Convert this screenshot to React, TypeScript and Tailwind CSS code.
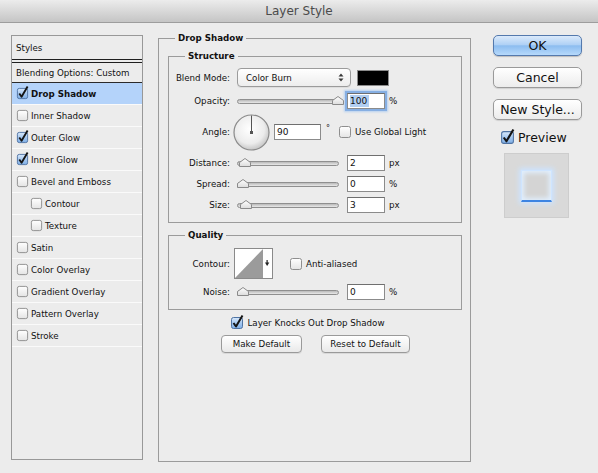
import type { ReactNode } from 'react';

const font = "font-['DejaVu_Sans',sans-serif]";

function CheckBox({ checked = false, size = 12 }: { checked?: boolean; size?: number }) {
  return (
    <svg width={size + 2} height={size + 2} viewBox="0 0 14 14" className="shrink-0 overflow-visible">
      <defs>
        <linearGradient id={checked ? 'cbOn' : 'cbOff'} x1="0" y1="0" x2="0" y2="1">
          {checked ? (
            <>
              <stop offset="0" stopColor="#d9e9fb" />
              <stop offset="0.5" stopColor="#a7c9f0" />
              <stop offset="1" stopColor="#7eaee6" />
            </>
          ) : (
            <>
              <stop offset="0" stopColor="#ffffff" />
              <stop offset="1" stopColor="#e4e4e4" />
            </>
          )}
        </linearGradient>
      </defs>
      <rect
        x="1.5"
        y="1.5"
        width="11"
        height="11"
        rx="2"
        fill={checked ? 'url(#cbOn)' : 'url(#cbOff)'}
        stroke={checked ? '#4f73a3' : '#8e8e8e'}
      />
      {checked && (
        <path d="M3.5 7 L6 10.5 L12.5 -0.5" fill="none" stroke="#151515" strokeWidth="2" strokeLinejoin="round" />
      )}
    </svg>
  );
}

const sideItems: { label: string; checked?: boolean; indent?: boolean; active?: boolean }[] = [
  { label: 'Drop Shadow', checked: true, active: true },
  { label: 'Inner Shadow' },
  { label: 'Outer Glow', checked: true },
  { label: 'Inner Glow', checked: true },
  { label: 'Bevel and Emboss' },
  { label: 'Contour', indent: true },
  { label: 'Texture', indent: true },
  { label: 'Satin' },
  { label: 'Color Overlay' },
  { label: 'Gradient Overlay' },
  { label: 'Pattern Overlay' },
  { label: 'Stroke' },
];

function Slider({ pos }: { pos: number }) {
  return (
    <div className="relative h-[16px] w-[104px]">
      <div className="absolute left-[1px] right-[1px] top-[6px] h-[5px] rounded-full border border-[#8f8f8f] bg-gradient-to-b from-[#b9b9b9] to-[#e9e9e9]" />
      <svg width="12" height="9" viewBox="0 0 12 9" className="absolute top-[3px]" style={{ left: pos }}>
        <defs>
          <linearGradient id="thumb" x1="0" y1="0" x2="0" y2="1">
            <stop offset="0" stopColor="#ffffff" />
            <stop offset="1" stopColor="#dcdcdc" />
          </linearGradient>
        </defs>
        <path d="M0.5 4.5 L6 0.5 L11.5 4.5 V8.5 H0.5 Z" fill="url(#thumb)" stroke="#8a8a8a" />
      </svg>
    </div>
  );
}

function Field({ value, focus = false, w = 38 }: { value: string; focus?: boolean; w?: number }) {
  return (
    <div
      className={`flex h-[16px] items-center border border-[#8b8b8b] border-t-[#6f6f6f] bg-white pl-[2px] text-[9px] ${
        focus ? 'shadow-[0_0_0_2px_#86afe3,0_0_2px_3px_#b6d0f0]' : ''
      }`}
      style={{ width: w }}
    >
      <span className={focus ? 'bg-[#b2cff1] pr-[2px]' : ''}>{value}</span>
    </div>
  );
}

function Label({ children }: { children: ReactNode }) {
  return <div className="w-[61px] shrink-0 text-right">{children}</div>;
}

function SliderRow({ label, value, unit, pos }: { label: string; value: string; unit: string; pos: number }) {
  return (
    <div className="flex h-[16px] items-center">
      <Label>{label}</Label>
      <div className="ml-[6px]">
        <Slider pos={pos} />
      </div>
      <div className="ml-[7px]">
        <Field value={value} />
      </div>
      <span className="ml-[4px]">{unit}</span>
    </div>
  );
}

function SmallButton({ children, w }: { children: ReactNode; w: number }) {
  return (
    <div
      className="flex h-[18px] items-center justify-center rounded-[4px] border border-[#9a9a9a] bg-gradient-to-b from-white to-[#e9e9e9] shadow-[0_1px_0_rgba(0,0,0,0.08)]"
      style={{ width: w }}
    >
      {children}
    </div>
  );
}

function Group({ title, children, className = '' }: { title: string; children: ReactNode; className?: string }) {
  return (
    <fieldset className={`border border-[#9b9b9b] ${className}`}>
      <legend className="ml-[16px] px-[3px] text-[8.7px] font-bold leading-[12px]">{title}</legend>
      {children}
    </fieldset>
  );
}

export default function App() {
  return (
    <div className={`h-[473px] w-[598px] overflow-hidden bg-[#ececec] text-[8.7px] leading-[12px] text-[#111] ${font}`}>
      <div className="flex h-[23px] items-center justify-center border-b border-[#9d9d9d] bg-gradient-to-b from-[#ececec] to-[#c5c5c5] text-[12px] text-[#4b4b4b]">
        Layer Style
      </div>

      <div className="flex items-start pl-[11px] pt-[9px]">
        {/* left styles list */}
        <div className="mt-[3px] h-[425px] w-[132px] border border-[#989898] bg-[#ececec]">
          <div className="flex h-[23px] items-center pl-[4px]">Styles</div>
          <div className="h-[4px] border-y border-[#1f1f1f]" />
          <div className="flex h-[20px] items-center border-b border-[#2a2a2a] pl-[4px]">Blending Options: Custom</div>
          {sideItems.map((item) => (
            <div
              key={item.label}
              className={`flex h-[22px] items-center border-b border-[#fafafa] ${
                item.indent ? 'pl-[18px]' : 'pl-[4px]'
              } ${item.active ? 'bg-[#b4d3fa] font-bold' : ''}`}
            >
              <CheckBox checked={item.checked} size={11} />
              <span className="ml-[2px]">{item.label}</span>
            </div>
          ))}
        </div>

        {/* middle settings */}
        <Group title="Drop Shadow" className="ml-[15px] h-[430px] w-[313px]">
          <Group title="Structure" className="ml-[9px] mr-[8px] mt-[6px] pb-[9px]">
            <div className="mt-[6px] flex h-[19px] items-center">
              <Label>Blend Mode:</Label>
              <div className="ml-[7px] flex h-[19px] w-[114px] items-center justify-between rounded-[4px] border border-[#9b9b9b] bg-gradient-to-b from-white to-[#ededed] pl-[8px] pr-[6px] shadow-[0_1px_0_rgba(0,0,0,0.06)]">
                <span>Color Burn</span>
                <svg width="6" height="9" viewBox="0 0 6 9">
                  <path d="M0.5 3.5 L3 0.5 L5.5 3.5 Z M0.5 5.5 L3 8.5 L5.5 5.5 Z" fill="#3a3a3a" />
                </svg>
              </div>
              <div className="ml-[6px] h-[16px] w-[32px] border border-[#8a8a8a] bg-black" />
            </div>

            <div className="mt-[6px]">
              <div className="flex h-[16px] items-center">
                <Label>Opacity:</Label>
                <div className="ml-[6px]">
                  <Slider pos={96} />
                </div>
                <div className="ml-[7px]">
                  <Field value="100" focus />
                </div>
                <span className="ml-[4px]">%</span>
              </div>
            </div>

            <div className="mt-[5px] flex h-[36px] items-center">
              <Label>Angle:</Label>
              <svg width="37" height="37" viewBox="0 0 37 37" className="ml-[3px]">
                <defs>
                  <radialGradient id="dial" cx="0.45" cy="0.4" r="0.6">
                    <stop offset="0" stopColor="#ffffff" />
                    <stop offset="0.7" stopColor="#ececec" />
                    <stop offset="1" stopColor="#c6c6c6" />
                  </radialGradient>
                </defs>
                <circle cx="18.5" cy="18.5" r="17.5" fill="url(#dial)" stroke="#8a8a8a" strokeWidth="1.2" />
                <line x1="18.5" y1="18.5" x2="18.5" y2="1.5" stroke="#555" strokeWidth="1" />
                <rect x="17" y="17" width="3" height="3" fill="#555" />
              </svg>
              <div className="ml-[4px]">
                <Field value="90" w={47} />
              </div>
              <span className="mb-[6px] ml-[5px] text-[8px]">°</span>
              <div className="ml-[8px]">
                <CheckBox />
              </div>
              <span className="ml-[3px]">Use Global Light</span>
            </div>

            <div className="mt-[5px]">
              <SliderRow label="Distance:" value="2" unit="px" pos={3} />
            </div>
            <div className="mt-[5px]">
              <SliderRow label="Spread:" value="0" unit="%" pos={1} />
            </div>
            <div className="mt-[5px]">
              <SliderRow label="Size:" value="3" unit="px" pos={4} />
            </div>
          </Group>

          <Group title="Quality" className="ml-[9px] mr-[8px] mt-[6px] pb-[9px]">
            <div className="mt-[7px] flex h-[31px] items-center">
              <Label>Contour:</Label>
              <div className="ml-[4px] flex h-[31px] w-[39px] border border-[#8a8a8a] bg-white">
                <svg width="37" height="29" viewBox="0 0 37 29">
                  <polygon points="0,29 28,0 28,29" fill="#9b9b9b" />
                  <rect x="31.5" y="11" width="1.2" height="3" fill="#222" />
                  <polygon points="30,13.5 34.3,13.5 32.1,17" fill="#222" />
                </svg>
              </div>
              <div className="ml-[16px]">
                <CheckBox />
              </div>
              <span className="ml-[3px]">Anti-aliased</span>
            </div>
            <div className="mt-[5px]">
              <SliderRow label="Noise:" value="0" unit="%" pos={1} />
            </div>
          </Group>

          <div className="mt-[6px] flex h-[14px] items-center justify-center pr-[14px]">
            <CheckBox checked />
            <span className="ml-[3px]">Layer Knocks Out Drop Shadow</span>
          </div>
          <div className="mt-[5px] flex items-center pl-[62px]">
            <SmallButton w={81}>Make Default</SmallButton>
            <div className="ml-[19px]">
              <SmallButton w={89}>Reset to Default</SmallButton>
            </div>
          </div>
        </Group>

        {/* right buttons */}
        <div className="ml-[22px] mt-[3px] flex w-[89px] flex-col text-[12.5px]">
          <div className="flex h-[21px] items-center justify-center rounded-[5px] border border-[#5479ad] bg-[linear-gradient(180deg,#dbeafb_0%,#b0d1f5_45%,#8dbdf0_52%,#b6d9fb_100%)] shadow-[0_1px_1px_rgba(0,0,0,0.2)]">
            OK
          </div>
          <div className="mt-[11px] flex h-[21px] items-center justify-center rounded-[5px] border border-[#9a9a9a] bg-gradient-to-b from-white to-[#ececec] shadow-[0_1px_1px_rgba(0,0,0,0.12)]">
            Cancel
          </div>
          <div className="mt-[11px] flex h-[21px] items-center justify-center rounded-[5px] border border-[#9a9a9a] bg-gradient-to-b from-white to-[#ececec] shadow-[0_1px_1px_rgba(0,0,0,0.12)]">
            New Style...
          </div>
          <div className="mt-[10px] flex h-[15px] items-center pl-[7px]">
            <CheckBox checked size={13} />
            <span className="ml-[3px] text-[12.5px]">Preview</span>
          </div>
          <div className="ml-[11px] mt-[8px] flex h-[65px] w-[65px] items-center justify-center border border-[#cdcdcd] bg-[#d9d9d9]">
            <div className="h-[32px] w-[31px] border border-[#cfe5ff] border-b-2 border-b-[#3d84e2] bg-[#d4d4d4] shadow-[0_0_5px_2px_rgba(205,228,255,1),inset_0_0_5px_2px_rgba(225,240,255,1)]" />
          </div>
        </div>
      </div>
    </div>
  );
}
